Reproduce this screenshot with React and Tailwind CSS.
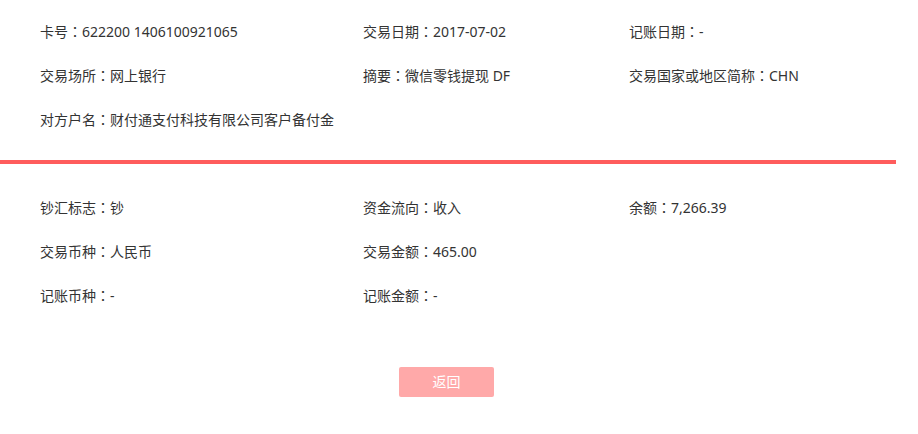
import React from 'react';

const top = [
  [['卡号', '622200 1406100921065'], ['交易日期', '2017-07-02'], ['记账日期', '-']],
  [['交易场所', '网上银行'], ['摘要', '微信零钱提现 DF'], ['交易国家或地区简称', 'CHN']],
  [['对方户名', '财付通支付科技有限公司客户备付金'], null, null],
];

const bottom = [
  [['钞汇标志', '钞'], ['资金流向', '收入'], ['余额', '7,266.39']],
  [['交易币种', '人民币'], ['交易金额', '465.00'], null],
  [['记账币种', '-'], ['记账金额', '-'], null],
];

const Rows = ({ rows }) => (
  <div className="pl-[40px]">
    {rows.map((row, i) => (
      <div key={i} className="grid grid-cols-[323px_266px_1fr] h-[44px] items-center">
        {row.map((cell, j) => (
          <span key={j} className="whitespace-nowrap">
            {cell && (
              <>
                {cell[0]}
                <span
                  className="inline-block w-[14px] text-center [text-spacing-trim:space-all]"
                  style={{ fontFamily: '"Noto Sans CJK JP", sans-serif' }}
                >
                  ：
                </span>
                {cell[1]}
              </>
            )}
          </span>
        ))}
      </div>
    ))}
  </div>
);

const App = () => {
  return (
    <div
      className="w-[896px] bg-white text-[14px] text-[#333333] leading-[20px]"
      style={{ fontFamily: '"Noto Sans", "Noto Sans CJK SC", sans-serif' }}
    >
      <div className="pt-[9px] pb-[19px]">
        <Rows rows={top} />
      </div>
      <div className="h-[4px] bg-[#ff5c5c]"></div>
      <div className="pt-[21px]">
        <Rows rows={bottom} />
      </div>
      <div className="flex justify-center pt-[50px] pr-[3px]">
        <button className="w-[95px] h-[30px] rounded-[2px] bg-[#ffa9a9] text-white text-[14px]">
          返回
        </button>
      </div>
    </div>
  );
};

export default App;
